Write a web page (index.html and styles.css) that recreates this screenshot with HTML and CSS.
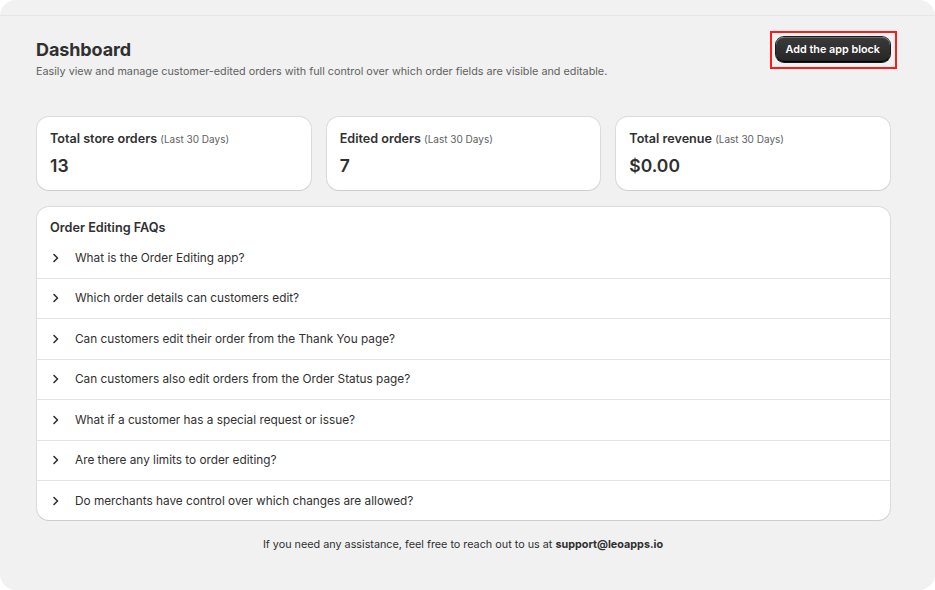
FILE: index.html
```html
<!DOCTYPE html>
<html>
<head>
<meta name="viewport" content="width=device-width, initial-scale=1">
<link rel="stylesheet" href="styles.css">
</head>
<body>

<div class="frame">
  <div class="topbar"></div>

  <div class="page">
    <div class="header">
      <div>
        <h1>Dashboard</h1>
        <p class="subtitle">Easily view and manage customer-edited orders with full control over which order fields are visible and editable.</p>
      </div>
      <button type="button" class="primarybtn">Add the app block</button>
    </div>

    <div class="stats">
      <div class="card stat">
        <div class="stat-title">Total store orders <span>(Last 30 Days)</span></div>
        <div class="stat-value">13</div>
      </div>
      <div class="card stat">
        <div class="stat-title">Edited orders <span>(Last 30 Days)</span></div>
        <div class="stat-value">7</div>
      </div>
      <div class="card stat">
        <div class="stat-title">Total revenue <span>(Last 30 Days)</span></div>
        <div class="stat-value">$0.00</div>
      </div>
    </div>

    <div class="card faq">
      <h2>Order Editing FAQs</h2>
      <div class="faq-row"><svg viewBox="0 0 16 16"><path d="M6 4.5 9.5 8 6 11.5"/></svg>What is the Order Editing app?</div>
      <div class="faq-row"><svg viewBox="0 0 16 16"><path d="M6 4.5 9.5 8 6 11.5"/></svg>Which order details can customers edit?</div>
      <div class="faq-row"><svg viewBox="0 0 16 16"><path d="M6 4.5 9.5 8 6 11.5"/></svg>Can customers edit their order from the Thank You page?</div>
      <div class="faq-row"><svg viewBox="0 0 16 16"><path d="M6 4.5 9.5 8 6 11.5"/></svg>Can customers also edit orders from the Order Status page?</div>
      <div class="faq-row"><svg viewBox="0 0 16 16"><path d="M6 4.5 9.5 8 6 11.5"/></svg>What if a customer has a special request or issue?</div>
      <div class="faq-row"><svg viewBox="0 0 16 16"><path d="M6 4.5 9.5 8 6 11.5"/></svg>Are there any limits to order editing?</div>
      <div class="faq-row"><svg viewBox="0 0 16 16"><path d="M6 4.5 9.5 8 6 11.5"/></svg>Do merchants have control over which changes are allowed?</div>
    </div>

    <p class="footer">If you need any assistance, feel free to reach out to us at <b>support@leoapps.io</b></p>
  </div>
</div>

</body>
</html>
```

FILE: styles.css
```css
* {
  box-sizing: border-box;
}

body {
  margin: 0;
  background: #ffffff;
  font-family: Inter, "Noto Sans", Arial, sans-serif;
  color: #303030;
}

.frame {
  height: 590px;
  background: #f1f1f1;
  border-radius: 16px;
  overflow: hidden;
}

.topbar {
  height: 16px;
  border-bottom: 1px solid #e6e6e6;
}

.page {
  padding: 22px 45px 0 36px;
}

.header {
  display: flex;
  justify-content: space-between;
  align-items: flex-start;
}

h1 {
  margin: 0;
  font-size: 18px;
  line-height: 24px;
  font-weight: 700;
  letter-spacing: -0.1px;
}

.subtitle {
  margin: 0;
  font-size: 10.8px;
  line-height: 20px;
  color: #616161;
}

/* red annotation box round the button */
.primarybtn {
  position: relative;
  margin-top: -1px;
  height: 25px;
  padding: 0 10px;
  border: none;
  border-radius: 8px;
  background: linear-gradient(#3a3a3a, #262626);
  box-shadow: inset 0 -1px 0 #000, inset 0 1px 0 rgba(255,255,255,0.25), 0 0 0 1px #1a1a1a;
  color: #fff;
  font-family: inherit;
  font-size: 10.8px;
  font-weight: 600;
  cursor: pointer;
}

.primarybtn::after {
  content: "";
  position: absolute;
  top: -6px;
  left: -6px;
  right: -7px;
  bottom: -7px;
  border: 2px solid #ff1a1a;
}

.card {
  background: #ffffff;
  border-radius: 12px;
  box-shadow: 0 1px 0 rgba(26,26,26,0.07), 0 0 0 1px rgba(0,0,0,0.09);
}

.stats {
  display: grid;
  grid-template-columns: 1fr 1fr 1fr;
  gap: 16px;
  margin: 35px 0 0 1px;
}

.stat {
  height: 73px;
  padding: 12px 13px;
}

.stat-title {
  font-size: 12.6px;
  line-height: 20px;
  font-weight: 600;
}

.stat-title span {
  font-size: 10px;
  font-weight: 400;
  color: #616161;
}

.stat-value {
  margin-top: 5px;
  font-size: 17.5px;
  line-height: 24px;
  font-weight: 600;
}

.faq {
  margin: 17px 0 0 1px;
  padding-top: 11px;
  overflow: hidden;
}

h2 {
  margin: 0;
  padding: 0 13px;
  font-size: 12.7px;
  line-height: 20px;
  font-weight: 600;
}

.faq-row {
  display: flex;
  align-items: center;
  height: 40.5px;
  padding-left: 11px;
  font-size: 11.8px;
  border-bottom: 1px solid #e3e3e3;
}

.faq-row:last-child {
  border-bottom: none;
  height: 39px;
}

.faq-row svg {
  width: 16px;
  height: 16px;
  margin-right: 11px;
  fill: none;
  stroke: #303030;
  stroke-width: 1.6;
  stroke-linecap: round;
  stroke-linejoin: round;
}

.footer {
  margin: 15px 0 0;
  text-align: center;
  font-size: 10.8px;
  line-height: 20px;
}
```
